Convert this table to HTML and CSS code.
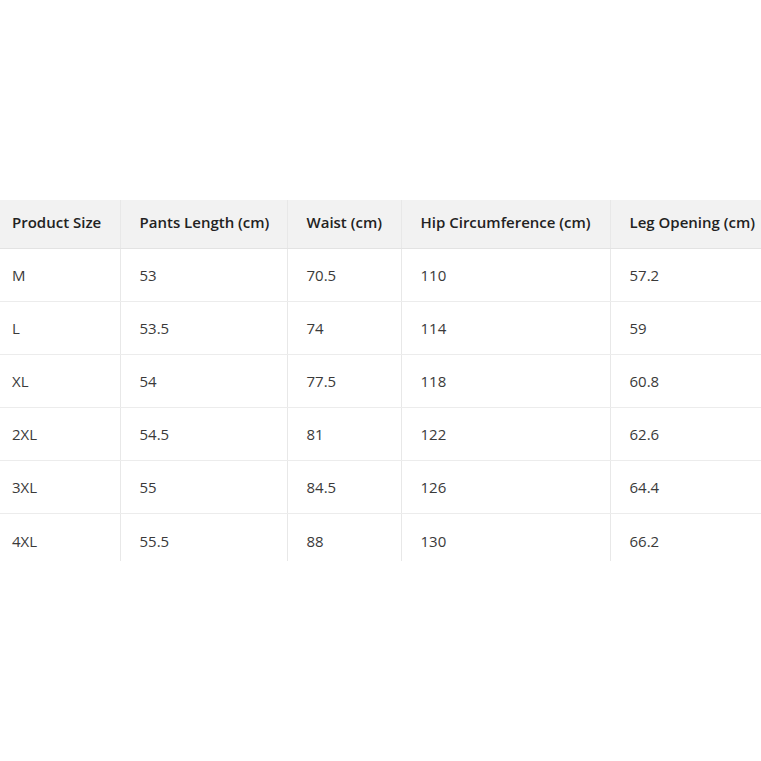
FILE: index.html
```html
<!DOCTYPE html>
<html>
<head>
<meta charset="utf-8">
<link rel="stylesheet" href="styles.css">
</head>
<body>
<div class="wrap">
<table class="size-table">
<colgroup>
<col class="c1"><col class="c2"><col class="c3"><col class="c4"><col class="c5">
</colgroup>
<thead>
<tr><th>Product Size</th><th>Pants Length (cm)</th><th>Waist (cm)</th><th>Hip Circumference (cm)</th><th>Leg Opening (cm)</th></tr>
</thead>
<tbody>
<tr><td>M</td><td>53</td><td>70.5</td><td>110</td><td>57.2</td></tr>
<tr><td>L</td><td>53.5</td><td>74</td><td>114</td><td>59</td></tr>
<tr><td>XL</td><td>54</td><td>77.5</td><td>118</td><td>60.8</td></tr>
<tr><td>2XL</td><td>54.5</td><td>81</td><td>122</td><td>62.6</td></tr>
<tr><td>3XL</td><td>55</td><td>84.5</td><td>126</td><td>64.4</td></tr>
<tr class="last"><td>4XL</td><td>55.5</td><td>88</td><td>130</td><td>66.2</td></tr>
</tbody>
</table>
</div>
</body>
</html>
```
FILE: styles.css
```css
html, body {
  margin: 0;
  padding: 0;
  background: #fff;
  overflow: hidden;
}
.wrap {
  padding-top: 200px;
  width: 761px;
  overflow: hidden;
}
.size-table {
  border-collapse: collapse;
  table-layout: fixed;
  width: 780px;
  font-family: "Open Sans", "Noto Sans", sans-serif;
  font-size: 15px;
  color: #333;
}
.c1 { width: 120px; }
.c2 { width: 167px; }
.c3 { width: 114px; }
.c4 { width: 209px; }
.c5 { width: 170px; }
.size-table th, .size-table td {
  text-align: left;
  padding: 0 0 0 19px;
  border-left: 1px solid #e8e8e8;
  white-space: nowrap;
}
.size-table th:first-child, .size-table td:first-child {
  border-left: none;
  padding-left: 12px;
}
.size-table th {
  background: #f2f2f2;
  font-weight: 600;
  color: #222;
  height: 44px;
  padding-bottom: 4px;
  border-bottom: 1px solid #e3e3e3;
}
.size-table td {
  height: 52px;
  font-weight: 400;
  color: #3a3a3a;
  border-bottom: 1px solid #ececec;
}
.size-table tr.last td {
  border-bottom: none;
  height: 41px;
  padding-top: 6px;
}
```
